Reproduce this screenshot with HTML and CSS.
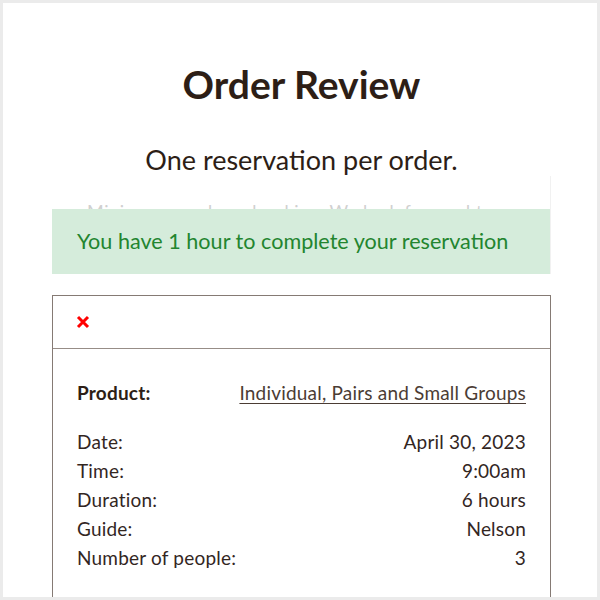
FILE: index.html
```html
<!DOCTYPE html>
<html lang="en">
<head>
<meta charset="utf-8">
<title>Order Review</title>
<link rel="stylesheet" href="styles.css">
</head>
<body>
<div class="frame">
  <div class="page">
    <h1 class="title">Order Review</h1>
    <p class="subtitle">One reservation per order.</p>
    <div class="notice-box">
      <p class="notice-hidden">Minimum one hour booking. We look forward to you.</p>
      <div class="notice">You have 1 hour to complete your reservation</div>
    </div>
    <div class="card">
      <div class="card-head">
        <svg class="close" width="14" height="14" viewBox="0 0 14 14" aria-hidden="true">
          <path d="M2 2 L12 12 M12 2 L2 12" stroke="#ff0000" stroke-width="3" stroke-linecap="butt" fill="none"/>
        </svg>
      </div>
      <div class="card-body">
        <div class="row product">
          <span class="label strong">Product:</span>
          <a class="value link" href="#">Individual, Pairs and Small Groups</a>
        </div>
        <div class="details">
          <div class="row"><span class="label">Date:</span><span class="value">April 30, 2023</span></div>
          <div class="row"><span class="label">Time:</span><span class="value">9:00am</span></div>
          <div class="row"><span class="label">Duration:</span><span class="value">6 hours</span></div>
          <div class="row"><span class="label">Guide:</span><span class="value">Nelson</span></div>
          <div class="row"><span class="label">Number of people:</span><span class="value">3</span></div>
        </div>
      </div>
    </div>
  </div>
</div>
</body>
</html>
```
FILE: styles.css
```css
html, body {
  margin: 0;
  padding: 0;
  background: #ffffff;
}

.frame {
  width: 600px;
  height: 600px;
  box-sizing: border-box;
  border: 3px solid #ebebeb;
  overflow: hidden;
  padding-left: 49px;
  font-family: "Lato", "Open Sans", sans-serif;
  color: #33261f;
}

.page {
  width: 499px;
}

.title {
  margin: 58px 0 0;
  font-size: 39px;
  line-height: 1.2;
  font-weight: 700;
  text-align: center;
  color: #2d1e16;
}

.subtitle {
  margin: 36px 0 0;
  font-size: 27px;
  line-height: 1.2;
  text-align: center;
  color: #2d1e16;
}

.notice-box {
  margin-top: 0;
  padding-top: 23px;
  border-right: 1px solid #f1f1f1;
}

.notice-hidden {
  margin: 0;
  padding-left: 35px;
  font-size: 18px;
  line-height: 24px;
  letter-spacing: 0.6px;
  color: #d0d0d0;
  white-space: nowrap;
}

.notice {
  position: relative;
  margin-top: -14px;
  height: 65px;
  line-height: 65px;
  padding-left: 25px;
  background: #d5ecdb;
  color: #23852f;
  font-size: 21.6px;
}

.card {
  margin-top: 21px;
  border: 1px solid #857a74;
}

.card-head {
  height: 52px;
  display: flex;
  align-items: center;
  padding-left: 23px;
  border-bottom: 1px solid #978d87;
}

.close {
  display: block;
}

.card-body {
  padding: 29px 24px 40px 24px;
}

.row {
  display: flex;
  justify-content: space-between;
  font-size: 19px;
  letter-spacing: 0.2px;
  line-height: 29px;
}

.details {
  margin-top: 20px;
}

.strong {
  font-weight: 700;
  color: #2d1e16;
}

.link {
  color: #4b3c34;
  text-decoration: underline;
  text-underline-offset: 3px;
}

.value {
  text-align: right;
}
```
